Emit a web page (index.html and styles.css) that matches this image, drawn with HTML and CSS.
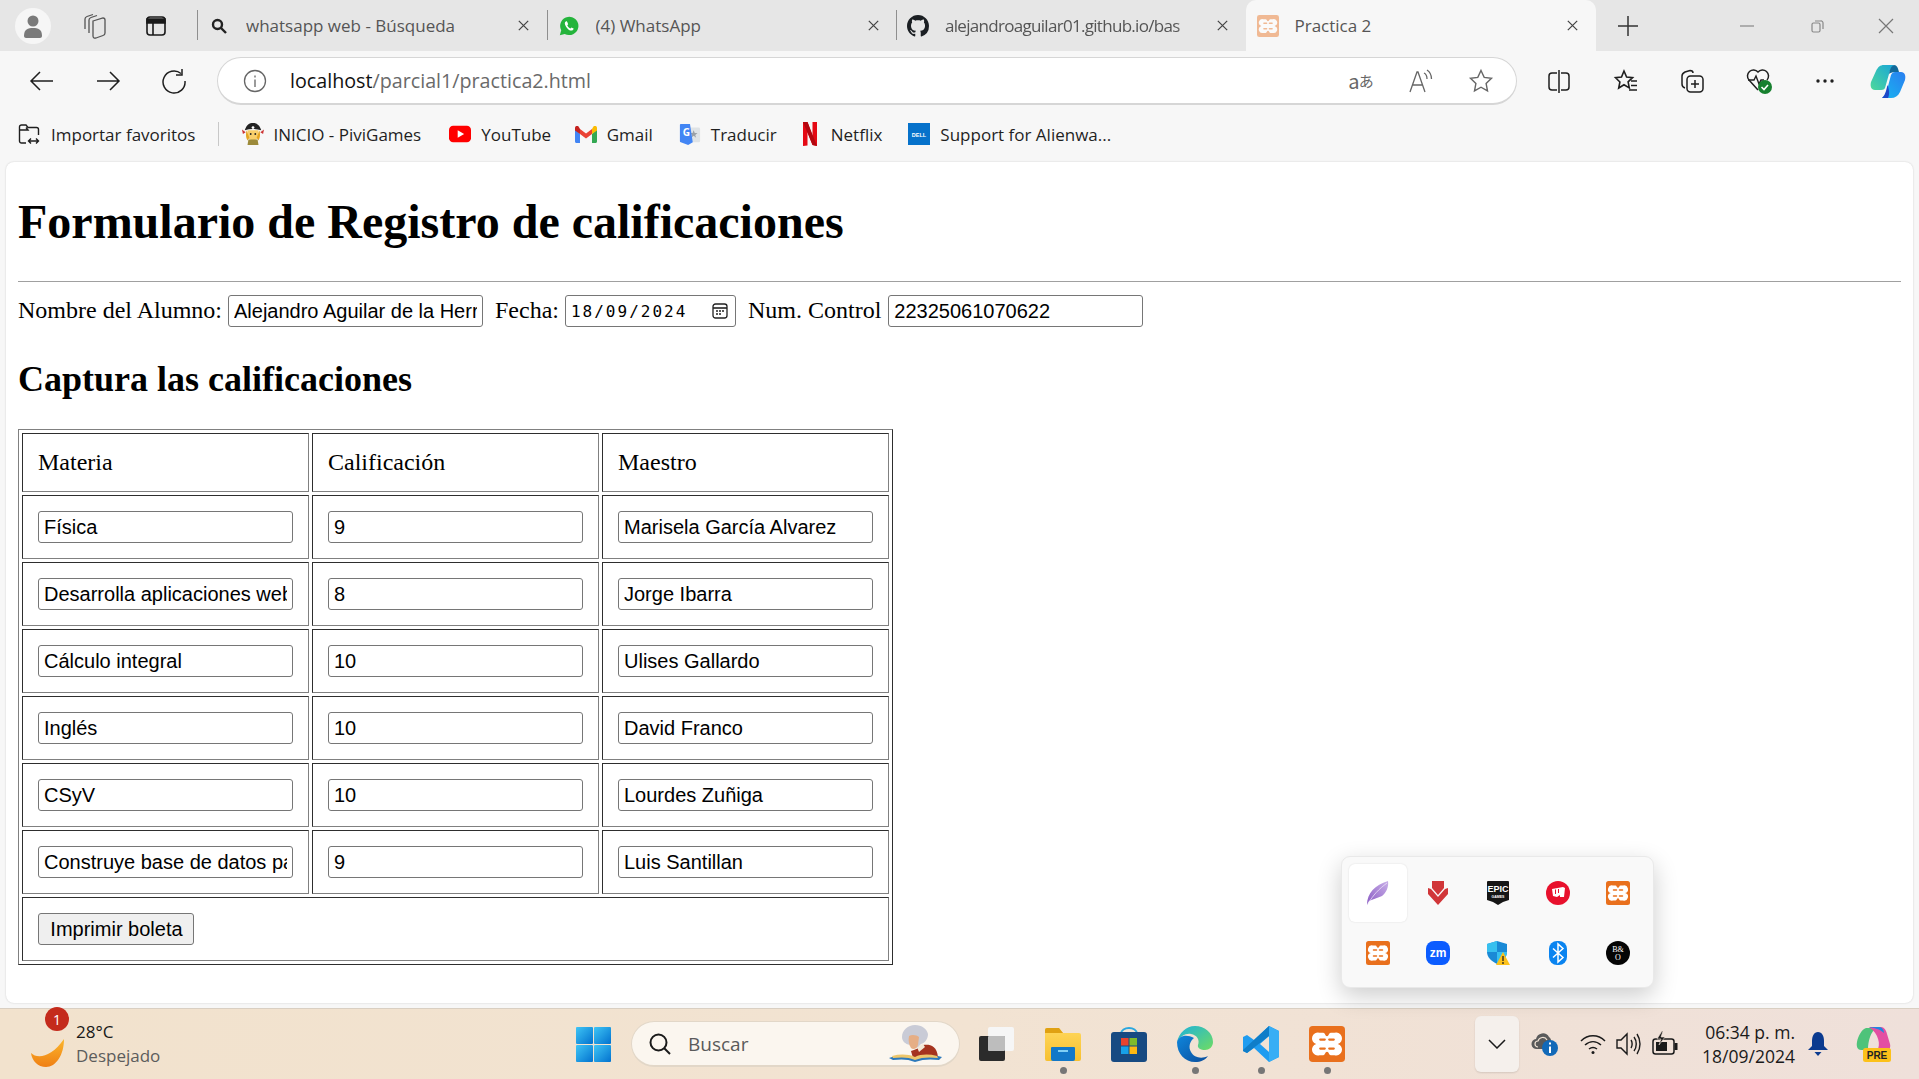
FILE: index.html
```html
<!DOCTYPE html>
<html lang="es">
<head>
<meta charset="utf-8">
<title>Practica 2</title>
<link rel="stylesheet" href="styles.css">
</head>
<body>
<svg class="defs" aria-hidden="true">
  <defs>
    <linearGradient id="g-win" x1="0" y1="0" x2="1" y2="1"><stop offset="0" stop-color="#3fc5f5"/><stop offset="1" stop-color="#0272cf"/></linearGradient>
    <linearGradient id="g-sun" x1="0" y1="0" x2="0" y2="1"><stop offset="0" stop-color="#fbb62c"/><stop offset="1" stop-color="#ef7f14"/></linearGradient>
    <linearGradient id="g-edge-top" x1="0" y1="0" x2="1" y2="1"><stop offset="0" stop-color="#1db2dc"/><stop offset="1" stop-color="#6fdc62"/></linearGradient>
    <linearGradient id="g-edge-bot" x1="0" y1="0" x2="1" y2="1"><stop offset="0" stop-color="#0f86dc"/><stop offset="1" stop-color="#0a4d9c"/></linearGradient>
    <linearGradient id="g-cop-l" x1="1" y1="0" x2="0" y2="1"><stop offset="0" stop-color="#19a6d8"/><stop offset="1" stop-color="#4ed89a"/></linearGradient>
    <linearGradient id="g-cop-r" x1="1" y1="0" x2="0" y2="1"><stop offset="0" stop-color="#2a7ef0"/><stop offset="1" stop-color="#18b6f0"/></linearGradient>
    <linearGradient id="g-folder" x1="0" y1="0" x2="0" y2="1"><stop offset="0" stop-color="#ffd75c"/><stop offset="1" stop-color="#f7c02f"/></linearGradient>
    <linearGradient id="g-feather" x1="0" y1="1" x2="1" y2="0"><stop offset="0" stop-color="#8a5bc4"/><stop offset="1" stop-color="#c9b0e8"/></linearGradient>
    <symbol id="i-xampp" viewBox="0 0 24 24">
      <rect width="24" height="24" rx="2.500" fill="#e9701d"/>
      <path d="M7 4.500h2.500c1.200 0 1.300 2.300 2.500 2.300s1.300-2.300 2.500-2.300H17a3.800 3.800 0 0 1 2.200 7.500A3.800 3.800 0 0 1 17 19.500h-2.500c-1.200 0-1.300-2.300-2.500-2.300s-1.300 2.300-2.500 2.300H7A3.800 3.800 0 0 1 4.800 12 3.800 3.800 0 0 1 7 4.500z" fill="#fff"/>
      <path d="M7.500 9h3M7.500 15h3M13.500 9h3M13.500 15h3" stroke="#e9701d" stroke-width="1.500" stroke-linecap="round"/>
    </symbol>
    <symbol id="i-x" viewBox="0 0 16 16"><path d="M3 3l10 10M13 3L3 13" fill="none" stroke="#444" stroke-width="1.300"/></symbol>
  </defs>
</svg>

<div class="app">
  <header class="tabstrip">
    <div class="side-tools">
      <div class="slot"><span class="avatar"><svg width="22" height="24" viewBox="0 0 22 24"><circle cx="11" cy="7" r="5.500" fill="#7a7a7a"/><path d="M2 22c0-7 4-8 9-8s9 1 9 8c0 1-1 2-2 2H4c-1 0-2-1-2-2z" fill="#7a7a7a"/></svg></span></div>
      <div class="slot"><svg width="24" height="26" viewBox="0 0 24 26" fill="none" stroke="#555" stroke-width="1.300"><path d="M10 8l10-3c1 0 2 1 2 2v13c0 1-.5 2-2 2.500L13 25c-2 .5-3-.5-3-2z"/><path d="M6 20V7c0-1 .5-2 2-2.500L14 2.500"/><path d="M2 16V6c0-1 .5-2 2-2.500L10 1.500"/></svg></div>
      <div class="slot"><svg width="24" height="24" viewBox="0 0 24 24" fill="none" stroke="#1a1a1a" stroke-width="1.600"><rect x="3" y="3" width="18" height="18" rx="3"/><path d="M3 5h18v4H3z" fill="#1a1a1a"/><path d="M9 9v12"/></svg></div>
    </div>
    <div class="tab tab-sep">
      <span class="fav"><svg width="18" height="18" viewBox="0 0 18 18" fill="none" stroke="#222" stroke-width="2.400"><circle cx="7.500" cy="7.500" r="4.500"/><path d="M11 11l5 5"/></svg></span>
      <span class="tab-title">whatsapp web - Búsqueda</span>
      <span class="fav"><svg class="close-x" viewBox="0 0 16 16"><use href="#i-x"/></svg></span>
    </div>
    <div class="tab tab-sep">
      <span class="fav"><svg width="24" height="24" viewBox="0 0 24 24"><path d="M2 22l1.500-5.300A10 10 0 1 1 7.300 20.600z" fill="#25b43c"/><path d="M8.500 7c-1.500 1-1.500 3 .5 6s4.500 4.500 6.500 3.800c1-.4 1.700-1.300 1.500-2l-2.300-1.200-1.100 1.200c-1.400-.5-3-2.100-3.500-3.500l1-1.100L10 7.300C9.500 6.800 9 6.800 8.500 7z" fill="#fff"/></svg></span>
      <span class="tab-title">(4) WhatsApp</span>
      <span class="fav"><svg class="close-x" viewBox="0 0 16 16"><use href="#i-x"/></svg></span>
    </div>
    <div class="tab tab-sep">
      <span class="fav"><svg width="24" height="24" viewBox="0 0 16 16"><path fill="#1b1f23" d="M8 0C3.580 0 0 3.580 0 8c0 3.540 2.290 6.530 5.470 7.590.4.070.55-.17.55-.38 0-.19-.01-.82-.01-1.490-2.010.37-2.530-.49-2.690-.94-.09-.23-.48-.94-.82-1.130-.28-.15-.68-.52-.01-.53.630-.01 1.080.58 1.230.82.720 1.210 1.870.87 2.330.66.070-.52.280-.87.510-1.070-1.780-.2-3.640-.89-3.640-3.950 0-.87.310-1.590.820-2.150-.08-.2-.36-1.020.08-2.120 0 0 .67-.21 2.200.82.64-.18 1.320-.27 2-.27s1.360.09 2 .27c1.530-1.040 2.200-.82 2.200-.82.44 1.100.16 1.920.08 2.120.51.560.82 1.270.82 2.150 0 3.070-1.870 3.750-3.650 3.950.29.250.54.730.54 1.480 0 1.070-.01 1.930-.01 2.200 0 .21.150.46.550.38A8.010 8.010 0 0 0 16 8c0-4.420-3.580-8-8-8z"/></svg></span>
      <span class="tab-title tab-fade">alejandroaguilar01.github.io/bas</span>
      <span class="fav"><svg class="close-x" viewBox="0 0 16 16"><use href="#i-x"/></svg></span>
    </div>
    <div class="tab tab-active">
      <span class="fav"><svg class="fav-pale" width="24" height="24"><use href="#i-xampp"/></svg></span>
      <span class="tab-title">Practica 2</span>
      <span class="fav"><svg class="close-x" viewBox="0 0 16 16"><use href="#i-x"/></svg></span>
    </div>
    <div class="plus-slot"><svg width="22" height="22" viewBox="0 0 22 22" stroke="#333" stroke-width="1.500"><path d="M11 1v20M1 11h20"/></svg></div>
    <div class="win-controls">
      <div class="wc"><svg width="16" height="16" viewBox="0 0 16 16" stroke="#888" stroke-width="1.200"><path d="M1 8h14"/></svg></div>
      <div class="wc"><svg width="16" height="16" viewBox="0 0 16 16" fill="none" stroke="#888" stroke-width="1.200"><rect x="3" y="5" width="8" height="9" rx="1.500"/><path d="M6 3h5.500A2 2 0 0 1 14 5v6"/></svg></div>
      <div class="wc wc-last"><svg width="16" height="16" viewBox="0 0 16 16" stroke="#777" stroke-width="1.200"><path d="M1 1l14 14M15 1L1 15"/></svg></div>
    </div>
  </header>

  <nav class="toolbar">
    <div class="tb-slot"><svg width="26" height="26" viewBox="0 0 26 26" fill="none" stroke="#1f1f1f" stroke-width="1.500"><path d="M24 13H2M11 4l-9 9 9 9"/></svg></div>
    <div class="tb-slot"><svg width="26" height="26" viewBox="0 0 26 26" fill="none" stroke="#1f1f1f" stroke-width="1.500"><path d="M2 13h22M15 4l9 9-9 9"/></svg></div>
    <div class="tb-slot"><svg width="26" height="26" viewBox="0 0 26 26" fill="none" stroke="#1f1f1f" stroke-width="1.500"><path d="M20 5.500A11 11 0 1 0 24 13"/><path d="M21 1v6h-6"/></svg></div>
    <div class="address">
      <span class="addr-info"><svg width="24" height="24" viewBox="0 0 24 24" fill="none" stroke="#666" stroke-width="1.300"><circle cx="12" cy="12" r="10.500"/><path d="M12 10.500V18M12 6.500v2"/></svg></span>
      <span class="url"><span class="url-host">localhost</span>/parcial1/practica2.html</span>
      <div class="addr-tools">
        <span class="addr-tool addr-text"><span class="tr-a">a</span><span class="tr-b">あ</span></span>
        <span class="addr-tool"><svg width="28" height="26" viewBox="0 0 28 26" fill="none" stroke="#666" stroke-width="1.300"><path d="M3 24l7-20h1l7 20M5.500 17h10"/><path d="M17 5c2 1 3 3 3 6M20 2c3 2 4.500 5 4.500 9"/></svg></span>
        <span class="addr-tool"><svg width="26" height="26" viewBox="0 0 26 26" fill="none" stroke="#666" stroke-width="1.400"><path d="M13 2.500l3.200 6.900 7.300.9-5.400 5.100 1.400 7.500-6.500-3.700-6.500 3.700 1.400-7.500-5.400-5.100 7.300-.9z"/></svg></span>
      </div>
    </div>
    <div class="tb-right">
      <div class="tb-slot"><svg width="26" height="26" viewBox="0 0 26 26" fill="none" stroke="#1f1f1f" stroke-width="1.500"><rect x="3" y="5" width="20" height="17" rx="3"/><path d="M13 2v23" stroke="#f7f7f7" stroke-width="4"/><path d="M13 2v23"/></svg></div>
      <div class="tb-slot"><svg width="26" height="26" viewBox="0 0 26 26" fill="none" stroke="#1f1f1f" stroke-width="1.600"><path d="M11 3l2.600 6 6 .7-4.500 4.200 1.200 6-5.300-3.200L5.700 20l1.200-6L2.500 9.700l6-.7z"/><path d="M18 13h6M18 17.500h6M16 22h8"/></svg></div>
      <div class="tb-slot"><svg width="26" height="26" viewBox="0 0 26 26" fill="none" stroke="#1f1f1f" stroke-width="1.500"><path d="M6 20c-2-.5-3-2-3-4V8c0-2 1-3 3-4l5-1.500c1.500 0 3 1 3 2.500"/><rect x="8" y="8" width="16" height="16" rx="3.500"/><path d="M16 12v8M12 16h8"/></svg></div>
      <div class="tb-slot"><svg width="28" height="28" viewBox="0 0 28 28"><path d="M13 23L4 13a6 6 0 0 1 9-8 6 6 0 0 1 9 8" fill="none" stroke="#1f1f1f" stroke-width="1.500"/><path d="M3 13h6l2-4 3 8 2-4h3" fill="none" stroke="#1f1f1f" stroke-width="1.400"/><circle cx="20" cy="20" r="7" fill="#17802f"/><path d="M16.500 20l2.500 2.500 4-4.500" fill="none" stroke="#fff" stroke-width="1.600"/></svg></div>
      <div class="tb-slot"><svg width="22" height="6" viewBox="0 0 22 6" fill="#1f1f1f"><circle cx="4" cy="3" r="1.700"/><circle cx="11" cy="3" r="1.700"/><circle cx="18" cy="3" r="1.700"/></svg></div>
      <div class="tb-slot tb-copilot"><svg width="36" height="34" viewBox="0 0 36 34"><path d="M14 1h10c-3 2-4 5-5 9l-4 14c-1 2-3 2-6 2H5c-4 0-5-4-4-8L6 7c2-4 4-6 8-6z" fill="url(#g-cop-l)"/><path d="M24 1c3 0 4 3 5 7h-4c-3 0-5 1-6 2 1-5 2-8 5-9z" fill="#11699a"/><path d="M25 8h6c4 0 5 4 4 8l-5 12c-2 4-5 6-9 6h-9c3-2 4-5 5-8l4-15c1-2 2-3 4-3z" fill="url(#g-cop-r)"/><path d="M17.500 21L16 27c-1 3-2 5-4 7h6c2-4 1-9-.5-13z" fill="#1b48c8"/></svg></div>
    </div>
  </nav>

  <nav class="bookmarks">
    <span class="bm bm-first">
      <span class="bm-icon"><svg width="22" height="22" viewBox="0 0 22 22" fill="none" stroke="#1f1f1f" stroke-width="1.400"><path d="M8 20H3.500A2 2 0 0 1 1.500 18V4a2 2 0 0 1 2-2H8l2 2.500h8.500a2 2 0 0 1 2 2V12"/><path d="M1.500 7H10l-2-2.500M11 18h9M13 15.500L10.500 18l2.500 2.500M18 15.500l2.500 2.500-2.500 2.500"/></svg></span>
      <span>Importar favoritos</span>
    </span>
    <span class="bm-sep"></span>
    <span class="bm bm-pivi">
      <span class="bm-icon"><svg width="24" height="26" viewBox="0 0 24 26"><path d="M3 9c2-6 5-8 9-8s7 2 9 8c-6-2-12-2-18 0z" fill="#222"/><circle cx="12" cy="6" r="1.500" fill="#fff"/><path d="M0 8l4 3-3 2zM24 8l-4 3 3 2z" fill="#c33"/><path d="M6 9h12v6c0 3-3 5-6 5s-6-2-6-5z" fill="#f8cf6a"/><path d="M5 9c-1 4-1 8 1 11l2-3zM19 9c1 4 1 8-1 11l-2-3z" fill="#e5a521"/><path d="M7 19h10l1 6H6z" fill="#9c8a3a"/><circle cx="9.500" cy="13" r="1" fill="#222"/><circle cx="14.500" cy="13" r="1" fill="#222"/></svg></span>
      <span>INICIO - PiviGames</span>
    </span>
    <span class="bm bm-yt">
      <span class="bm-icon"><svg width="24" height="18" viewBox="0 0 24 18"><rect width="24" height="18" rx="4.500" fill="#f00"/><path d="M9.500 5l7 4-7 4z" fill="#fff"/></svg></span>
      <span>YouTube</span>
    </span>
    <span class="bm">
      <span class="bm-icon"><svg width="22" height="17" viewBox="0 0 22 17"><path d="M0 2v13.500c0 .800.600 1.500 1.500 1.500H5V8z" fill="#4285f4"/><path d="M22 2v13.500c0 .800-.6 1.500-1.500 1.500H17V8z" fill="#34a853"/><path d="M17 3v5l5-3.500V2c0-1.800-2-2.800-3.400-1.700z" fill="#fbbc04"/><path d="M5 8V3l6 4.500L17 3v5l-6 4.500z" fill="#ea4335"/><path d="M0 2v2.500L5 8V3L3.400.300C2-.8 0 .2 0 2z" fill="#c5221f"/></svg></span>
      <span>Gmail</span>
    </span>
    <span class="bm bm-tr">
      <span class="bm-icon"><svg width="24" height="24" viewBox="0 0 24 24"><rect x="9" y="5" width="14" height="16" rx="1.500" fill="#dfe3e6"/><path d="M16 8l1.200 3h3l-2.500 2 1 3-2.700-2-2.700 2 1-3-2.500-2h3z" fill="#9aa0a6"/><path d="M2 1h10l3 20-5 3-8-3a1 1 0 0 1-1-1V2a1 1 0 0 1 1-1z" fill="#4285f4"/><text x="4" y="14" class="svg-g">G</text></svg></span>
      <span>Traducir</span>
    </span>
    <span class="bm">
      <span class="bm-icon"><svg width="14" height="24" viewBox="0 0 14 24"><path d="M0 0h4.500l5 14V0H14v24l-4.500-1-5-13v13.500L0 24z" fill="#e50914"/><path d="M0 0h4.500L14 24l-4.500-1z" fill="#b20710"/></svg></span>
      <span>Netflix</span>
    </span>
    <span class="bm">
      <span class="bm-icon"><svg width="24" height="24" viewBox="0 0 24 24"><rect width="24" height="24" fill="#0672cb"/><text x="12" y="15" class="svg-dell" text-anchor="middle">DELL</text></svg></span>
      <span>Support for Alienwa...</span>
    </span>
  </nav>

  <main class="content">
    <h1 class="page-title">Formulario de Registro de calificaciones</h1>
    <hr class="rule">
    <form class="student-row">
      <label class="lbl lbl-name" for="alumno">Nombre del Alumno:</label>
      <input class="field field-top" id="alumno" type="text" value="Alejandro Aguilar de la Herrera">
      <label class="lbl lbl-date">Fecha:</label>
      <div class="date-field">
        <span class="date-text">18/09/2024</span>
        <svg width="18" height="18" viewBox="0 0 18 18" fill="none" stroke="#222" stroke-width="1.300"><rect x="2" y="2" width="14" height="14" rx="2.500"/><path d="M2 6h14" stroke-width="1.600"/><path d="M5 9h2M8 9h2M11 9h2M5 12h2M8 12h2" stroke-width="1.500"/></svg>
      </div>
      <label class="lbl lbl-num" for="control">Num. Control</label>
      <input class="field field-top" id="control" type="text" value="22325061070622">
    </form>
    <h2 class="subtitle">Captura las calificaciones</h2>
    <table class="grades">
      <thead>
        <tr class="row-head"><td>Materia</td><td>Calificación</td><td>Maestro</td></tr>
      </thead>
      <tbody>
        <tr><td><input class="field" type="text" value="Física"></td><td><input class="field" type="text" value="9"></td><td><input class="field" type="text" value="Marisela García Alvarez"></td></tr>
        <tr><td><input class="field" type="text" value="Desarrolla aplicaciones web"></td><td><input class="field" type="text" value="8"></td><td><input class="field" type="text" value="Jorge Ibarra"></td></tr>
        <tr><td><input class="field" type="text" value="Cálculo integral"></td><td><input class="field" type="text" value="10"></td><td><input class="field" type="text" value="Ulises Gallardo"></td></tr>
        <tr><td><input class="field" type="text" value="Inglés"></td><td><input class="field" type="text" value="10"></td><td><input class="field" type="text" value="David Franco"></td></tr>
        <tr><td><input class="field" type="text" value="CSyV"></td><td><input class="field" type="text" value="10"></td><td><input class="field" type="text" value="Lourdes Zuñiga"></td></tr>
        <tr><td><input class="field" type="text" value="Construye base de datos para"></td><td><input class="field" type="text" value="9"></td><td><input class="field" type="text" value="Luis Santillan"></td></tr>
        <tr><td colspan="3"><button class="print-btn" type="button">Imprimir boleta</button></td></tr>
      </tbody>
    </table>
  </main>

  <footer class="taskbar">
    <div class="weather">
      <span class="weather-icon">
        <svg width="33" height="28" viewBox="0 0 33 28"><path d="M33 0c0 16-8 28-18 28C7 28 1 22 0 14c6 6 20 5 33-14z" fill="url(#g-sun)"/></svg>
        <span class="weather-badge">1</span>
      </span>
      <span class="weather-text"><span class="temp">28°C</span><span class="sky">Despejado</span></span>
    </div>
    <svg class="win-logo" width="35" height="35" viewBox="0 0 35 35"><rect width="17" height="17" rx="1" fill="url(#g-win)"/><rect x="18" width="17" height="17" rx="1" fill="url(#g-win)"/><rect y="18" width="17" height="17" rx="1" fill="url(#g-win)"/><rect x="18" y="18" width="17" height="17" rx="1" fill="url(#g-win)"/></svg>
    <div class="search">
      <svg width="24" height="24" viewBox="0 0 24 24" fill="none" stroke="#1a1a1a" stroke-width="2"><circle cx="10.500" cy="10.500" r="8"/><path d="M16 16l6 6"/></svg>
      <span class="search-text">Buscar</span>
      <svg class="mascot" width="53" height="37" viewBox="0 0 53 37"><path d="M22 26c4-1 8-3 12-6 6-1 14 0 15 12L24 33z" fill="#a5341f"/><path d="M28 22l6-3 2 3-6 5z" fill="#f3ead8"/><path d="M13 12C13 5 19 0 26 0c7 0 12 4 13 9 0 5-3 9-7 10l-3 3c-3 2-6 0-8-2-5-1-8-4-8-8z" fill="#c9cbd6"/><path d="M20 11c3-2 8-1 10 1l-1 8c-1 4-5 5-7 3-2-3-3-8-2-12z" fill="#e6ae85"/><path d="M0 33c8-3 18-3 26 0 8-3 18-3 27-1l-3 3c-8-1-16-1-24 2-7-3-14-3-22-2z" fill="#2d79bb"/><path d="M3 31c8-2 16-2 23 1 6-3 14-3 22-1l1 2c-8-1-16-1-23 2-6-3-14-3-22-2z" fill="#edc66b"/></svg>
    </div>
    <div class="tray-app tv-slot"><svg width="35" height="34" viewBox="0 0 35 34"><rect x="9" y="0" width="26" height="24" rx="2" fill="#f6f6f6"/><rect y="9" width="26" height="25" rx="2" fill="#2b2b2b"/><rect x="9" y="9" width="17" height="15" rx="1" fill="#bdbdbd"/></svg></div>
    <div class="tray-app has-dot"><svg width="36" height="34" viewBox="0 0 36 34"><path d="M0 3a2 2 0 0 1 2-2h12l4 5h16a2 2 0 0 1 2 2v24a2 2 0 0 1-2 2H2a2 2 0 0 1-2-2z" fill="url(#g-folder)"/><path d="M0 3a2 2 0 0 1 2-2h12l4 5H0z" fill="#e0a112"/><path d="M7 20h22a1 1 0 0 1 1 1v11a2 2 0 0 1-2 2H8a2 2 0 0 1-2-2V21a1 1 0 0 1 1-1z" fill="#1278c8"/><path d="M13 24h10" stroke="#7fd0f5" stroke-width="2"/></svg></div>
    <div class="tray-app"><svg width="36" height="36" viewBox="0 0 36 36"><path d="M10 8c0-8 16-8 16 0" fill="none" stroke="#2aa7df" stroke-width="2"/><rect y="6" width="36" height="30" rx="3" fill="#174a82"/><rect x="10" y="12" width="7.500" height="7.500" fill="#e8432e"/><rect x="18.500" y="12" width="7.500" height="7.500" fill="#7fba2b"/><rect x="10" y="20.500" width="7.500" height="7.500" fill="#18a1e8"/><rect x="18.500" y="20.500" width="7.500" height="7.500" fill="#fdb813"/></svg></div>
    <div class="tray-app has-dot"><svg width="36" height="36" viewBox="0 0 36 36"><path d="M0 16C2 7 9 0 18 0c10 0 18 7 18 16 0 5-4 8-8 8s-8-2-7-5c2-5-1-10-7-11-5-1-11 2-14 8z" fill="url(#g-edge-top)"/><path d="M0 16c0 12 8 20 18 20 6 0 10-2 13-6-6 3-14 2-17-4-3-5-1-11 3-14C10 8 2 9 0 16z" fill="url(#g-edge-bot)"/></svg></div>
    <div class="tray-app has-dot"><svg width="36" height="36" viewBox="0 0 36 36"><path d="M26 0l10 5v26l-10 5-15-14-7 5-4-2V11l4-2 7 5zM26 10l-9 8 9 8z" fill="#1f9cf0"/><path d="M26 0l10 5v26l-10 5z" fill="#38aef5"/><path d="M26 0v10L4 27l-4-2v-1z" fill="#0f7dc8"/></svg></div>
    <div class="tray-app has-dot"><svg width="36" height="36"><use href="#i-xampp"/></svg></div>
    <div class="chevron-box"><svg width="18" height="10" viewBox="0 0 18 10" fill="none" stroke="#1a1a1a" stroke-width="1.500"><path d="M1 1l8 8 8-8"/></svg></div>
    <div class="sys sys-cloud"><svg width="28" height="26" viewBox="0 0 28 26"><path d="M6 18a5 5 0 0 1-1-10 7 7 0 0 1 13-2 5 5 0 0 1 2 5v7z" fill="#5a5a5a"/><path d="M7 16a3 3 0 0 1 0-6c1-4 7-5 9-1" fill="none" stroke="#f0e2d4" stroke-width="1.200"/><circle cx="19" cy="17" r="8" fill="#1269b8"/><path d="M19 15.500V22M19 11.500v2" stroke="#fff" stroke-width="2"/></svg></div>
    <div class="sys sys-wifi"><svg width="26" height="22" viewBox="0 0 26 22" fill="none" stroke="#1a1a1a" stroke-width="1.500"><path d="M1 8c7-7 17-7 24 0M5 12c5-4.500 11-4.500 16 0M9 16c2.500-2 5.500-2 8 0"/><circle cx="13" cy="19.500" r="1.500" fill="#1a1a1a" stroke="none"/></svg></div>
    <div class="sys sys-vol"><svg width="26" height="24" viewBox="0 0 26 24" fill="none" stroke="#1a1a1a" stroke-width="1.400"><path d="M1 8h4l6-6v20l-6-6H1z"/><path d="M15 8c1.500 2 1.500 6 0 8M18 5c3 4 3 10 0 14M21 2c4 6 4 14 0 20"/></svg></div>
    <div class="sys sys-bat"><svg width="28" height="26" viewBox="0 0 28 26"><rect x="2" y="8" width="21" height="15" rx="2.500" fill="none" stroke="#1a1a1a" stroke-width="1.500"/><rect x="5" y="11" width="11" height="9" fill="#1a1a1a"/><rect x="23.500" y="12" width="3" height="7" fill="#1a1a1a"/><path d="M11 0L6 8h4l-2 6 6-8h-4l2-6z" fill="#1a1a1a" stroke="#f1e3d6" stroke-width=".6"/></svg></div>
    <div class="clock"><span>06:34 p. m.</span><span>18/09/2024</span></div>
    <div class="sys sys-bell"><svg width="20" height="26" viewBox="0 0 20 26" fill="#0b3a8f"><path d="M10 1c4 0 6 4 6 9v5l4 4H0l4-4v-5c0-5 2-9 6-9z"/><path d="M6.500 21h7L10 25z"/></svg></div>
    <div class="sys sys-copilot"><svg width="36" height="36" viewBox="0 0 36 36"><path d="M11 2h10c-5 4-8 12-8 22H6C3 24 1 21 2 16 3 10 7 3 11 2z" fill="#4ec37a"/><path d="M14 1h12c3 0 5 3 6 7l3 10c1 4-1 7-5 7h-8c4-6 2-17-8-24z" fill="#e34fa2"/><path d="M14 1h10c3 0 5 3 5 6-4-4-10-5-15-6z" fill="#1f86e0"/><rect x="8" y="22" width="28" height="14" rx="2.500" fill="#fcc11a"/><text x="22" y="33" text-anchor="middle" class="svg-pre">PRE</text></svg></div>
  </footer>

  <aside class="flyout">
    <div class="fly-cell fly-hover"><svg width="24" height="24" viewBox="0 0 24 24"><path d="M1 24C1 12 9 4 22 0c1 6-2 12-6 15-4 2-9 3-13 5z" fill="url(#g-feather)"/><path d="M2 23C7 14 13 8 21 2" fill="none" stroke="#f3ecfb" stroke-width=".7"/></svg></div>
    <div class="fly-cell"><svg width="20" height="24" viewBox="0 0 20 24"><path d="M4 0h12v7l-6 7-6-7z" fill="#d13639"/><path d="M0 7l3 1 7 8 7-8 3-1v6L10 24 0 13z" fill="#d13639"/></svg></div>
    <div class="fly-cell"><svg width="22" height="24" viewBox="0 0 22 24"><path d="M1 0h20a1 1 0 0 1 1 1v18l-6 2-5 3-5-3-6-2V1a1 1 0 0 1 1-1z" fill="#161616"/><text x="11" y="11" text-anchor="middle" class="svg-epic">EPIC</text><text x="11" y="16.500" text-anchor="middle" class="svg-games">GAMES</text></svg></div>
    <div class="fly-cell"><svg width="24" height="24" viewBox="0 0 24 24"><circle cx="12" cy="12" r="12" fill="#e8112d"/><path d="M6 8l11-2 2 1-1 9h-4v-2l-3 2-4-1z" fill="#fff"/><path d="M9.500 8.500V13M12.500 8V12" stroke="#e8112d" stroke-width="1"/></svg></div>
    <div class="fly-cell"><svg width="24" height="24"><use href="#i-xampp"/></svg></div>
    <div class="fly-cell"><svg width="24" height="24"><use href="#i-xampp"/></svg></div>
    <div class="fly-cell"><svg width="24" height="24" viewBox="0 0 24 24"><rect width="24" height="24" rx="8" fill="#0b5cff"/><text x="12" y="16" text-anchor="middle" class="svg-zm">zm</text></svg></div>
    <div class="fly-cell"><svg width="24" height="24" viewBox="0 0 24 24"><path d="M11 0L1 3v8c0 5 4 9 10 12 6-3 10-7 10-12V3z" fill="#1a8ad6"/><path d="M11 0L1 3v8h10zM11 11v12c6-3 10-7 10-12z" fill="#37c0ef"/><path d="M17 11l7 13H10z" fill="#fcc11a"/><path d="M17 15v5M17 21v2" stroke="#222" stroke-width="1.300"/></svg></div>
    <div class="fly-cell"><svg width="18" height="24" viewBox="0 0 18 24"><rect width="18" height="24" rx="8" fill="#0a84f0"/><path d="M4 7.500l10 9-5 4.500V3l5 4.500-10 9" fill="none" stroke="#fff" stroke-width="1.500"/></svg></div>
    <div class="fly-cell"><svg width="24" height="24" viewBox="0 0 24 24"><circle cx="12" cy="12" r="12" fill="#050505"/><text x="12" y="11" text-anchor="middle" class="svg-bo">B&amp;</text><text x="12" y="19" text-anchor="middle" class="svg-bo">O</text></svg></div>
  </aside>
</div>
</body>
</html>
```

FILE: styles.css
```css
* { box-sizing: border-box; }
html, body { margin: 0; height: 100%; overflow: hidden; }
body { font-family: "Open Sans", "Noto Sans", sans-serif; color: #1f1f1f; }
.defs { position: absolute; width: 0; height: 0; }
.app { position: relative; width: 1919px; height: 1079px; display: flex; flex-direction: column; background: #f7f7f7; }

/* tab strip */
.tabstrip { display: flex; height: 51px; background: #e6e6e6; flex: none; }
.side-tools { display: grid; grid-template-columns: 60px 63px 60px; width: 197px; padding-left: 3px; }
.slot { display: flex; align-items: center; justify-content: center; }
.avatar { width: 36px; height: 36px; border-radius: 50%; background: #f6f6f6; display: flex; align-items: center; justify-content: center; }
.tab { position: relative; display: flex; align-items: center; width: 349.500px; padding: 0 12px 0 11px; gap: 16px; color: #555; }
.tab-sep::before { content: ""; position: absolute; left: 0; top: 10px; bottom: 11px; width: 1px; background: #8f8f8f; }
.fav { flex: none; width: 22px; display: flex; align-items: center; justify-content: center; }
.tab-title { flex: 1; min-width: 0; white-space: nowrap; overflow: hidden; font-size: 17px; }
.tab-fade { letter-spacing: -.7px; -webkit-mask-image: linear-gradient(to right, #000 92%, transparent); mask-image: linear-gradient(to right, #000 92%, transparent); }
.close-x { width: 15px; height: 15px; }
.tab-active { background: #f7f7f7; border-radius: 10px 10px 0 0; width: 350px; }
.fav-pale { opacity: .45; }
.plus-slot { width: 64px; display: flex; align-items: center; justify-content: center; }
.win-controls { margin-left: auto; display: grid; grid-template-columns: 70px 70px 67px; }
.wc { display: flex; align-items: center; justify-content: center; }

/* toolbar */
.toolbar { display: flex; align-items: center; height: 60px; padding-left: 9px; flex: none; }
.tb-slot { width: 66px; height: 48px; display: flex; align-items: center; justify-content: center; flex: none; }
.address { margin-left: 10px; width: 1300px; height: 48px; flex: none; display: flex; align-items: center; padding: 0 5px 0 23px; background: #fff; border: 1px solid #d6d6d6; border-bottom-width: 2px; border-radius: 24px; }
.addr-info { width: 28px; display: flex; justify-content: center; flex: none; }
.url { margin-left: 21px; font-size: 19.700px; color: #6a6a6a; white-space: nowrap; }
.url-host { color: #111; }
.addr-tools { margin-left: auto; display: grid; grid-template-columns: 60px 60px 60px; }
.addr-tool { display: flex; align-items: center; justify-content: center; color: #666; }
.addr-text { font-size: 20px; font-family: "Noto Sans CJK JP", sans-serif; }
.tr-b { font-size: 15px; margin-left: -1px; }
.tb-right { display: flex; margin-left: 9px; }
.tb-right .tb-slot { width: 66.500px; }
.tb-right .tb-copilot { margin-left: -4px; }

/* bookmarks */
.bookmarks { display: flex; align-items: flex-start; height: 51px; padding: 10px 0 0 18px; font-size: 17px; white-space: nowrap; flex: none; }
.bm { display: flex; align-items: center; gap: 10px; margin-right: 26px; height: 26px; }
.bm-first { gap: 11px; margin-right: 23px; }
.bm-icon { width: 22px; height: 26px; display: flex; align-items: center; justify-content: center; flex: none; }
.bm-pivi { gap: 9px; margin-right: 28px; }
.bm-yt { margin-right: 23.500px; }
.bm-tr { margin-right: 22px; }
.bm-sep { width: 1px; height: 24px; margin-top: 1px; background: #c8c8c8; margin-right: 23px; flex: none; }
.svg-g { font: 700 11px "Open Sans", sans-serif; fill: #fff; }
.svg-dell { font: 700 6px "Liberation Sans", sans-serif; fill: #fff; }

/* page */
.content { margin: 0 6px; padding: 0 12px; height: 841px; flex: none; background: #fff; border-radius: 8px; box-shadow: 0 0 2px rgba(0,0,0,.18); font-family: "Liberation Serif", serif; font-size: 24px; color: #000; }
.page-title { margin: 0; padding-top: 34px; font-size: 48px; font-weight: 700; line-height: 52px; }
.rule { margin: 33px 0 0; height: 1px; border: 0; background: #a0a0a0; }
.student-row { display: flex; align-items: center; height: 32px; margin-top: 13px; }
.lbl { padding-bottom: 2px; }
.lbl-name { margin-right: 6px; }
.lbl-date { margin: 0 6px 0 12px; }
.lbl-num { margin: 0 7px 0 12px; }
.field { display: block; width: 255px; height: 32px; padding: 0 5px; font: 20px "Liberation Sans", sans-serif; color: #000; background: #fff; border: 1px solid #767676; border-radius: 3px; outline: 0; }
.field-top { flex: none; }
.date-field { width: 171px; height: 32px; flex: none; display: flex; align-items: center; justify-content: space-between; padding: 0 6px 0 5px; border: 1px solid #767676; border-radius: 3px; background: #fff; }
.date-text { font: 16px "DejaVu Sans Mono", monospace; letter-spacing: 2px; }
.subtitle { margin: 35px 0 0; font-size: 36px; font-weight: 700; line-height: 34px; }
.grades { margin-top: 33px; border-collapse: separate; border-spacing: 3px; border: 1px solid; border-color: #808080 #2e2e2e #2e2e2e #808080; table-layout: fixed; width: 875px; }
.grades td { height: 64px; padding: 0 15px; border: 1px solid; border-color: #2e2e2e #808080 #808080 #2e2e2e; vertical-align: middle; }
.grades .row-head td { height: 59px; }
.print-btn { display: block; width: 156px; height: 32px; padding: 0 0 0 1px; font: 20px "Liberation Sans", sans-serif; color: #000; background: #efefef; border: 1px solid #767676; border-radius: 3px; }

/* taskbar */
.taskbar { margin-top: 5px; height: 71px; flex: none; display: flex; align-items: center; background: linear-gradient(90deg, #f2e2cd 0%, #f2e3d2 50%, #efe0da 100%); border-top: 1px solid #d9cfc2; color: #1a1a1a; }
.weather { width: 576px; flex: none; padding-left: 31px; display: flex; align-items: center; gap: 12px; }
.weather-icon { position: relative; width: 33px; height: 28px; margin-top: 18px; }
.weather-badge { position: absolute; left: 14px; top: -32px; width: 24px; height: 24px; border-radius: 50%; background: #c42b1c; color: #fff; font-size: 14px; display: flex; align-items: center; justify-content: center; }
.weather-text { display: flex; flex-direction: column; font-size: 17px; line-height: 24px; }
.sky { color: #5c5c5c; }
.win-logo { flex: none; }
.search { margin-left: 20px; width: 329px; height: 46px; flex: none; display: flex; align-items: center; padding: 0 17px 0 16px; background: #fbf6ef; border: 1px solid #e2d7c8; border-bottom-width: 2px; border-radius: 23px; }
.search-text { margin-left: 16px; font-size: 19px; color: #5a5a5a; }
.mascot { margin-left: auto; }
.tray-app { position: relative; width: 66px; height: 58px; flex: none; display: flex; align-items: center; justify-content: center; }
.tv-slot { width: 68px; margin-left: 2px; }
.has-dot::after { content: ""; position: absolute; left: 30px; bottom: -1px; width: 7px; height: 7px; border-radius: 50%; background: #767676; }
.chevron-box { margin-left: 115px; width: 44px; height: 56px; flex: none; display: flex; align-items: center; justify-content: center; background: #f5f0ec; border-radius: 6px; box-shadow: 0 1px 2px rgba(0,0,0,.12); }
.sys { display: flex; align-items: center; justify-content: center; flex: none; }
.sys-cloud { width: 36px; margin-left: 8px; }
.sys-wifi { width: 36px; margin-left: 12px; }
.sys-vol { width: 36px; }
.sys-bat { width: 36px; }
.clock { width: 112px; flex: none; display: flex; flex-direction: column; align-items: flex-end; font-size: 17.500px; line-height: 24px; }
.sys-bell { width: 45px; }
.sys-copilot { width: 66px; }
.svg-pre { font: 700 10px "Liberation Sans", sans-serif; fill: #222; }

/* flyout */
.flyout { position: absolute; left: 1341px; top: 856px; width: 313px; height: 132px; padding: 6px 5px 0 6px; display: grid; grid-template-columns: repeat(5, 60px); grid-template-rows: 60px 60px; background: #f9f9f9; border: 1px solid #e9e9e9; border-radius: 9px; box-shadow: 0 8px 24px rgba(0,0,0,.2); }
.fly-cell { display: flex; align-items: center; justify-content: center; border-radius: 6px; margin: 1px; }
.fly-hover { background: #fff; box-shadow: 0 0 2px rgba(0,0,0,.12); }
.svg-epic { font: 700 9px "Liberation Sans", sans-serif; fill: #fff; }
.svg-games { font: 700 3.500px "Liberation Sans", sans-serif; fill: #fff; }
.svg-zm { font: 700 12px "Liberation Sans", sans-serif; fill: #fff; }
.svg-bo { font: 8px "Liberation Serif", serif; fill: #fff; }
```
